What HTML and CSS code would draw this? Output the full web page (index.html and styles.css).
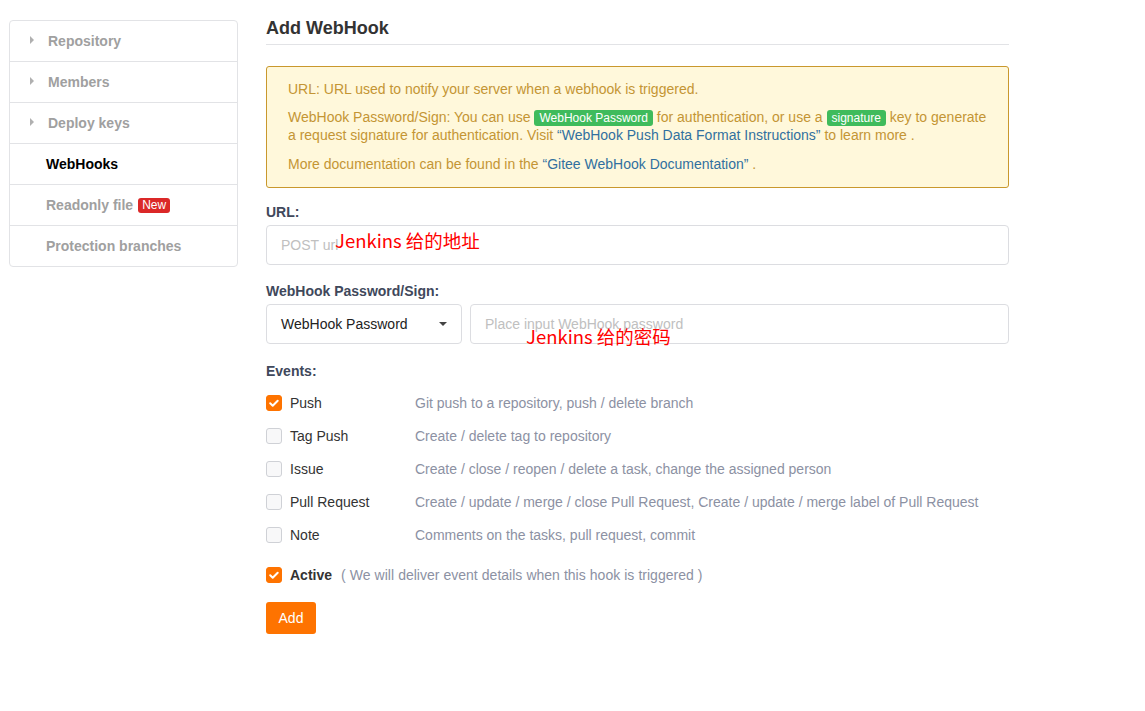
FILE: index.html
```html
<!DOCTYPE html>
<html>
<head>
<meta charset="utf-8">
<link rel="stylesheet" href="styles.css">
</head>
<body>
<div class="page">
  <nav class="sidebar">
    <div class="nav-item arrow"><span class="caret-r"></span>Repository</div>
    <div class="nav-item arrow"><span class="caret-r"></span>Members</div>
    <div class="nav-item arrow"><span class="caret-r"></span>Deploy keys</div>
    <div class="nav-item active">WebHooks</div>
    <div class="nav-item">Readonly file <span class="badge-new">New</span></div>
    <div class="nav-item">Protection branches</div>
  </nav>
  <main class="main">
    <h2 class="title">Add WebHook</h2>
    <div class="notice">
      <p>URL: URL used to notify your server when a webhook is triggered.</p>
      <p>WebHook Password/Sign: You can use <span class="tag">WebHook Password</span> for authentication, or use a <span class="tag">signature</span> key to generate a request signature for authentication. Visit <a class="link">“WebHook Push Data Format Instructions”</a> to learn more .</p>
      <p>More documentation can be found in the <a class="link">“Gitee WebHook Documentation”</a> .</p>
    </div>

    <label class="field-label">URL:</label>
    <div class="input-wrap">
      <div class="input"><span class="placeholder">POST url</span></div>
      <span class="annot annot-url">Jenkins 给的地址</span>
    </div>

    <label class="field-label second">WebHook Password/Sign:</label>
    <div class="pw-row">
      <div class="select">WebHook Password<span class="caret-d"></span></div>
      <div class="input-wrap grow">
        <div class="input"><span class="placeholder">Place input WebHook password</span></div>
        <span class="annot annot-pw">Jenkins 给的密码</span>
      </div>
    </div>

    <label class="field-label events">Events:</label>
    <div class="events">
      <div class="ev-row"><span class="cb checked"><svg viewBox="0 0 16 16" width="16" height="16"><path d="M4.2 8.3l2.5 2.4 5-5" fill="none" stroke="#fff" stroke-width="2" stroke-linecap="round" stroke-linejoin="round"/></svg></span><span class="ev-name">Push</span><span class="ev-desc">Git push to a repository, push / delete branch</span></div>
      <div class="ev-row"><span class="cb"></span><span class="ev-name">Tag Push</span><span class="ev-desc">Create / delete tag to repository</span></div>
      <div class="ev-row"><span class="cb"></span><span class="ev-name">Issue</span><span class="ev-desc">Create / close / reopen / delete a task, change the assigned person</span></div>
      <div class="ev-row"><span class="cb"></span><span class="ev-name">Pull Request</span><span class="ev-desc">Create / update / merge / close Pull Request, Create / update / merge label of Pull Request</span></div>
      <div class="ev-row"><span class="cb"></span><span class="ev-name">Note</span><span class="ev-desc">Comments on the tasks, pull request, commit</span></div>
    </div>

    <div class="active-row"><span class="cb checked"><svg viewBox="0 0 16 16" width="16" height="16"><path d="M4.2 8.3l2.5 2.4 5-5" fill="none" stroke="#fff" stroke-width="2" stroke-linecap="round" stroke-linejoin="round"/></svg></span><span class="active-name">Active</span><span class="active-desc">( We will deliver event details when this hook is triggered )</span></div>

    <button class="btn-add">Add</button>
  </main>
</div>
</body>
</html>
```
FILE: styles.css
```css
* { box-sizing: border-box; }
html, body { margin: 0; padding: 0; background: #fff; }
body { font-family: "Liberation Sans", Arial, sans-serif; font-size: 14px; color: #333; }

.page { display: flex; align-items: flex-start; padding: 20px 0 0 9px; }

.sidebar {
  width: 229px;
  border: 1px solid #e2e3e6;
  border-radius: 4px;
  flex: none;
}
.nav-item {
  height: 41px;
  display: flex;
  align-items: center;
  padding-left: 36px;
  font-weight: bold;
  color: #a0a0a0;
  border-top: 1px solid #e2e3e6;
}
.nav-item:first-child { height: 40px; border-top: none; }
.nav-item.arrow { padding-left: 20px; }
.nav-item.active { color: #000; }
.caret-r {
  width: 0; height: 0;
  border-top: 4.5px solid transparent;
  border-bottom: 4.5px solid transparent;
  border-left: 4px solid #b0b0b0;
  margin-right: 14px;
  margin-top: -3px;
}
.badge-new {
  display: inline-block;
  background: #db2828;
  color: #fff;
  font-weight: normal;
  font-size: 12px;
  line-height: 15px;
  padding: 0 4px;
  border-radius: 3px;
  margin-left: 5px;
}

.main { width: 743px; margin-left: 28px; margin-top: -4px; }

.title {
  margin: 0;
  font-size: 18px;
  line-height: 24px;
  font-weight: bold;
  color: #333;
  padding-bottom: 4px;
  border-bottom: 1px solid #e2e3e6;
}

.notice {
  margin-top: 21px;
  background: #fff8db;
  border: 1px solid #c9982d;
  border-radius: 3px;
  padding: 13px 20px 14px 21px;
  color: #c49534;
  line-height: 18px;
}
.notice p { margin: 0 0 10px; }
.notice p:last-child { margin-bottom: 0; margin-top: 11px; }
.tag {
  display: inline-block;
  background: #3fbb5c;
  color: #fff;
  font-size: 12px;
  line-height: 16px;
  padding: 0 5px;
  border-radius: 3px;
}
.link { color: #31709f; }

.field-label {
  display: block;
  margin-top: 15px;
  font-weight: bold;
  color: #40485b;
  line-height: 18px;
  margin-bottom: 4px;
}
.field-label.second { margin-top: 17px; }
.field-label.events { margin-top: 18px; margin-bottom: 15px; }

.input-wrap { position: relative; }
.input-wrap.grow { flex: 1; }
.input {
  height: 40px;
  border: 1px solid #dcdde1;
  border-radius: 4px;
  padding: 0 14px;
  display: flex;
  align-items: center;
}
.placeholder { color: #c0c0c0; }

.annot {
  position: absolute;
  font-family: "Noto Sans CJK SC", "Noto Sans", sans-serif;
  font-size: 18.5px;
  color: #f00;
  line-height: 26px;
  white-space: nowrap;
}
.annot-url { left: 69px; top: 2px; }
.annot-pw { left: 56px; top: 19px; }

.pw-row { display: flex; gap: 8px; }
.select {
  width: 196px;
  height: 40px;
  border: 1px solid #dcdde1;
  border-radius: 4px;
  padding: 0 14px;
  display: flex;
  align-items: center;
  justify-content: space-between;
  color: #222;
}
.caret-d {
  width: 0; height: 0;
  border-left: 4px solid transparent;
  border-right: 4px solid transparent;
  border-top: 4px solid #444;
}

.events { display: flex; flex-direction: column; gap: 17px; }
.ev-row { display: flex; align-items: center; height: 16px; }
.cb {
  width: 16px; height: 16px;
  border: 1px solid #cfd1d6;
  background: #f8f8f9;
  border-radius: 3px;
  flex: none;
  display: flex;
}
.cb.checked { background: #fe7300; border-color: #fe7300; }
.cb svg { margin: -1px; }
.ev-name { margin-left: 8px; width: 125px; color: #333; }
.ev-desc { color: #8c91a3; }

.active-row { display: flex; align-items: center; height: 16px; margin-top: 24px; }
.active-name { margin-left: 8px; font-weight: bold; color: #333; }
.active-desc { margin-left: 9px; color: #8c91a3; word-spacing: 0.2px; }

.btn-add {
  display: block;
  margin-top: 19px;
  width: 50px;
  height: 32px;
  border: none;
  border-radius: 3px;
  background: #fe7300;
  color: #fff;
  font-family: "Liberation Sans", Arial, sans-serif;
  font-size: 14px;
  padding: 0;
}
```
